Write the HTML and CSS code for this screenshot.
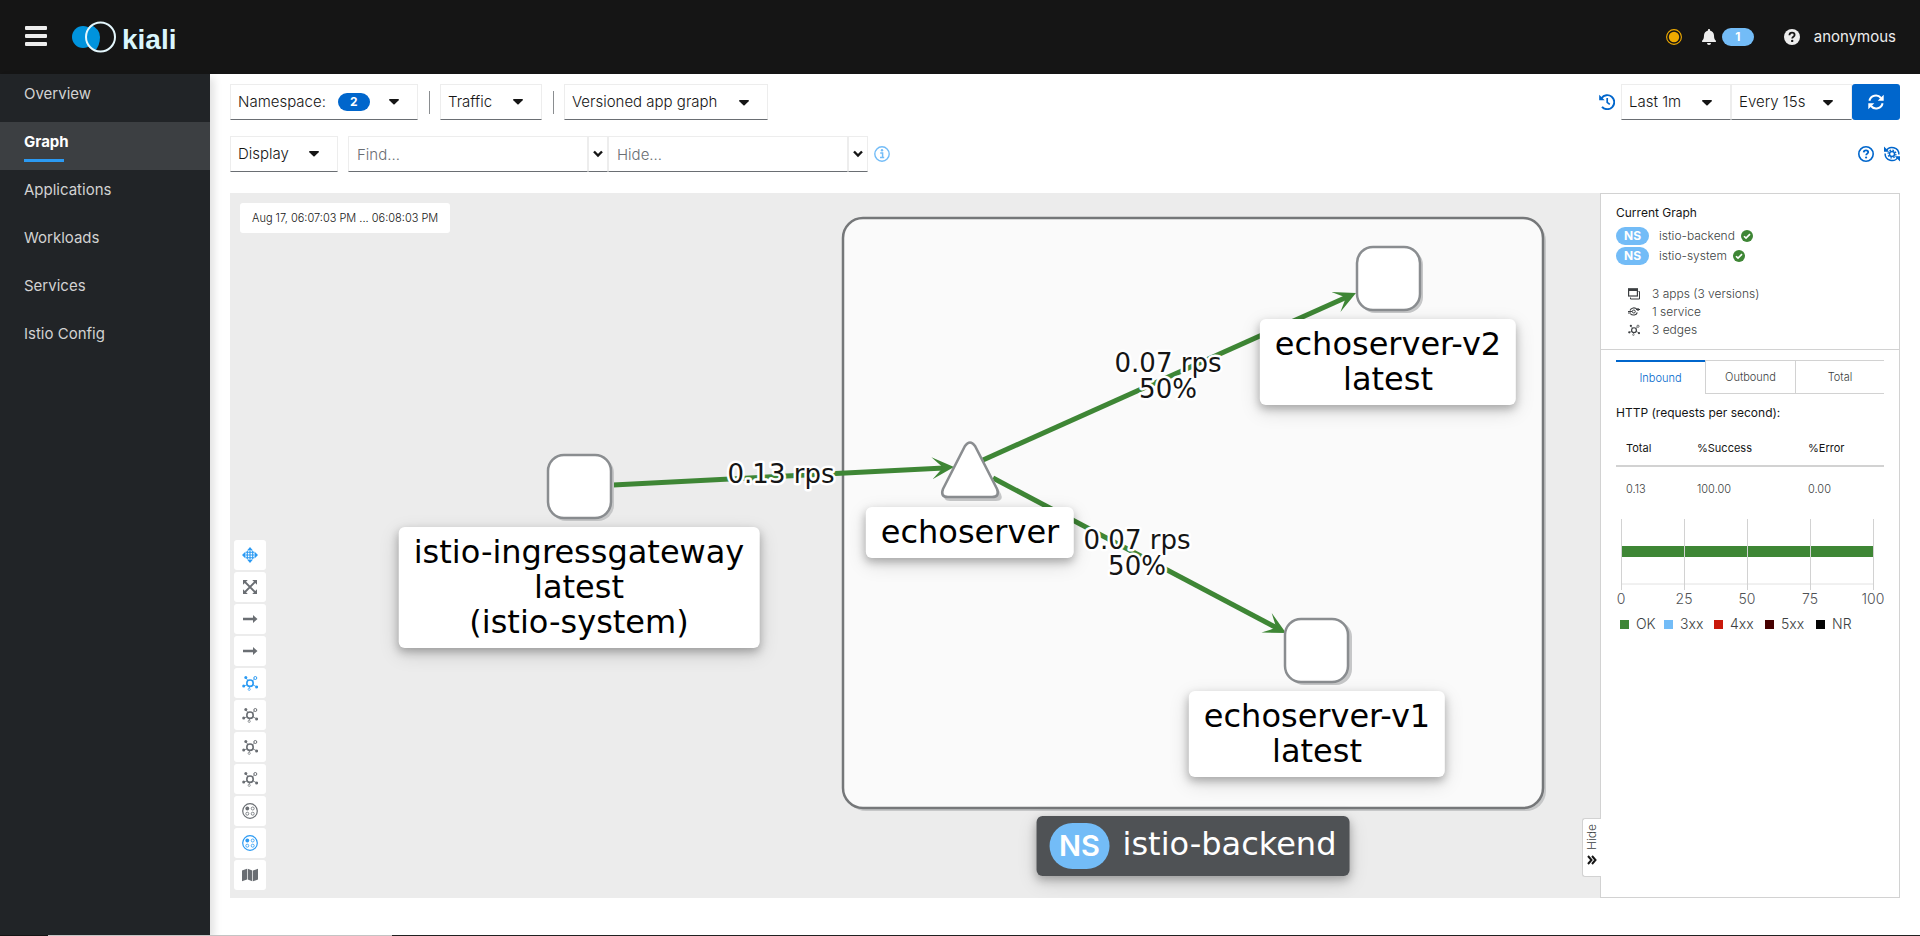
FILE: index.html
```html
<!DOCTYPE html>
<html lang="en">
<head>
<meta charset="utf-8">
<meta name="viewport" content="width=device-width, initial-scale=1">
<title>Kiali</title>
<link rel="stylesheet" href="styles.css">
</head>
<body>
<svg class="sprite" aria-hidden="true">
  <symbol id="i-topology" viewBox="0 0 16 16">
    <circle cx="8" cy="8.2" r="3.2" fill="none" stroke="currentColor" stroke-width="1.6"/>
    <circle cx="13.3" cy="3" r="1.5" fill="none" stroke="currentColor"/>
    <circle cx="3.8" cy="2.4" r="1.5" fill="currentColor"/>
    <circle cx="1.7" cy="11" r="1.5" fill="currentColor"/>
    <circle cx="14.6" cy="12" r="1.5" fill="currentColor"/>
    <circle cx="7.2" cy="14.3" r="1.1" fill="none" stroke="currentColor" stroke-width=".7"/>
    <path d="M4 3l2 2.6M12.3 4.2l-2 1.8M2 11l3.2-1.2M14.2 11.6l-3.2-1.8M7.3 13l.3-2" stroke="currentColor" stroke-width=".8" fill="none"/>
  </symbol>
  <symbol id="i-arrow" viewBox="0 0 16 16">
    <path d="M1 6.800h10V4L15.500 8 11 12V9.200H1z" fill="currentColor"/>
  </symbol>
  <symbol id="i-group" viewBox="0 0 16 16">
    <circle cx="8" cy="8" r="7.300" fill="none" stroke="currentColor" stroke-width="1.200"/>
    <circle cx="5.300" cy="5.500" r="1.900" fill="currentColor"/>
    <g fill="none" stroke="currentColor" stroke-width=".8"><circle cx="10.700" cy="5.500" r="1.500"/><circle cx="5.300" cy="10.700" r="1.500"/><circle cx="10.700" cy="10.700" r="1.500"/></g>
  </symbol>
  <symbol id="i-check" viewBox="0 0 16 16">
    <circle cx="8" cy="8" r="8" fill="#3e8635"/>
    <path d="M4 8.300l2.700 2.600L12 5.600" fill="none" stroke="#fff" stroke-width="2.200"/>
  </symbol>
  <symbol id="i-chevron" viewBox="0 0 10 8">
    <path d="M1 1.500l4 4 4-4" fill="none" stroke="currentColor" stroke-width="2.400"/>
  </symbol>
  <symbol id="i-caret" viewBox="0 0 10 6">
    <path d="M.8 0h8.400c.7 0 1 .8.500 1.300L5.600 5.300a.9.9 0 0 1-1.200 0L.3 1.300C-.2.8.1 0 .8 0z" fill="currentColor"/>
  </symbol>
</svg>

<header class="masthead">
  <button class="burger" type="button" aria-label="Global navigation"><span></span><span></span><span></span></button>
  <a class="brand" href="#" aria-label="Kiali home">
    <svg class="brand-mark" width="46" height="34" viewBox="0 0 46 34" aria-hidden="true">
      <circle cx="12" cy="17" r="11" fill="#0093dd"/>
      <path d="M20 5q9 4 9 12t-5 14q-9-5-9-14t5-12z" fill="#0093dd"/>
      <circle cx="29.500" cy="17" r="14.500" fill="none" stroke="#e4f7fd" stroke-width="2"/>
    </svg>
    <span class="brand-name">kiali</span>
  </a>
  <div class="masthead-tools">
    <svg width="16" height="16" viewBox="0 0 16 16" aria-hidden="true"><circle cx="8" cy="8" r="7.400" fill="none" stroke="#f0ab00" stroke-width="1.100"/><circle cx="8" cy="8" r="5.200" fill="#f0ab00"/></svg>
    <button class="notify" type="button" aria-label="Notifications">
      <svg width="14" height="16" viewBox="0 0 14 16" aria-hidden="true"><path d="M7 0c.6 0 1 .4 1 1v.6c2.300.5 4 2.400 4 4.900 0 2.800.7 4 1.700 5 .7.8.2 1.500-.700 1.500H1c-.9 0-1.400-.7-.7-1.500 1-1 1.700-2.200 1.700-5 0-2.500 1.700-4.400 4-4.900V1c0-.6.4-1 1-1zM5 14h4a2 2 0 0 1-4 0z" fill="#ededed"/></svg>
      <span class="badge badge-light">1</span>
    </button>
    <button class="help" type="button" aria-label="Help">
      <svg width="16" height="16" viewBox="0 0 16 16" aria-hidden="true"><circle cx="8" cy="8" r="8" fill="#ededed"/><path d="M5.400 6.200C5.500 4.600 6.500 3.700 8 3.700s2.600.9 2.600 2.200c0 1.700-2.400 1.900-2.400 3.600" fill="none" stroke="#151515" stroke-width="1.800"/><circle cx="8.200" cy="11.900" r="1.200" fill="#151515"/></svg>
    </button>
    <button class="user" type="button">anonymous</button>
  </div>
</header>

<div class="shell">
  <nav class="sidebar" aria-label="Main">
    <a href="#">Overview</a>
    <a href="#" class="current" aria-current="page">Graph</a>
    <a href="#">Applications</a>
    <a href="#">Workloads</a>
    <a href="#">Services</a>
    <a href="#">Istio Config</a>
  </nav>

  <main class="content">
    <div class="toolbar">
      <button class="drop drop-ns" type="button">Namespace: <span class="badge badge-blue">2</span><svg class="caret"><use href="#i-caret"/></svg></button>
      <span class="divider"></span>
      <button class="drop drop-traffic" type="button">Traffic<svg class="caret"><use href="#i-caret"/></svg></button>
      <span class="divider"></span>
      <span class="pick pick-type"><select aria-label="Graph type"><option>Versioned app graph</option></select><svg class="caret"><use href="#i-caret"/></svg></span>
      <div class="toolbar-end">
        <button class="icon-link" type="button" aria-label="Replay">
          <svg width="16" height="16" viewBox="0 0 16 16" aria-hidden="true"><path d="M2.500 4.200A7 7 0 1 1 3 12.800" fill="none" stroke="currentColor" stroke-width="1.900"/><path d="M.2.800v5.500h5.500z" fill="currentColor"/><path d="M8.200 4v4.400l2.600 2" fill="none" stroke="currentColor" stroke-width="1.700"/></svg>
        </button>
        <span class="pick pick-last"><select aria-label="Duration"><option>Last 1m</option></select><svg class="caret"><use href="#i-caret"/></svg></span>
        <span class="pick pick-every"><select aria-label="Refresh interval"><option>Every 15s</option></select><svg class="caret"><use href="#i-caret"/></svg></span>
        <button class="refresh" type="button" aria-label="Refresh">
          <svg width="16" height="16" viewBox="0 0 16 16" aria-hidden="true"><path d="M1.400 6.800A6.600 6.600 0 0 1 13 4M14.600 9.200A6.600 6.600 0 0 1 3 12" fill="none" stroke="#fff" stroke-width="2"/><path d="M15.700.8v6h-6zM.3 15.200v-6h6z" fill="#fff"/></svg>
        </button>
      </div>
    </div>

    <div class="toolbar toolbar-second">
      <button class="drop drop-display" type="button">Display<svg class="caret"><use href="#i-caret"/></svg></button>
      <div class="finder">
        <input type="text" placeholder="Find..." aria-label="Find">
        <button type="button" aria-label="Find presets"><svg width="10" height="8"><use href="#i-chevron"/></svg></button>
        <input type="text" placeholder="Hide..." aria-label="Hide">
        <button type="button" aria-label="Hide presets"><svg width="10" height="8"><use href="#i-chevron"/></svg></button>
      </div>
      <button class="info" type="button" aria-label="Find and hide help">
        <svg width="16" height="16" viewBox="0 0 16 16" aria-hidden="true"><circle cx="8" cy="8" r="7.200" fill="none" stroke="currentColor" stroke-width="1.400"/><path d="M6.200 7h2.400v4.300M6 11.500h4.200" fill="none" stroke="currentColor" stroke-width="1.500"/><circle cx="8" cy="4.300" r="1.200" fill="currentColor"/></svg>
      </button>
      <div class="toolbar-end help-links">
        <button class="icon-link" type="button" aria-label="Shortcuts and tips">
          <svg width="16" height="16" viewBox="0 0 16 16" aria-hidden="true"><circle cx="8" cy="8" r="7.200" fill="none" stroke="currentColor" stroke-width="1.600"/><path d="M5.700 6.400C5.800 5 6.700 4.400 8 4.400s2.200.7 2.200 1.800c0 1.400-2 1.500-2 3" fill="none" stroke="currentColor" stroke-width="1.800"/><circle cx="8.100" cy="11.500" r="1.100" fill="currentColor"/></svg>
        </button>
        <button class="icon-link" type="button" aria-label="Reset to factory settings">
          <svg width="16" height="16" viewBox="0 0 16 16" aria-hidden="true"><path d="M2 5A6.900 6.900 0 0 1 14.900 8.500M14 11A6.900 6.900 0 0 1 1.100 7.500" fill="none" stroke="currentColor" stroke-width="1.500"/><path d="M0 .5v5.200h5.200zM16 15.500v-5.200h-5.200z" fill="currentColor"/><circle cx="8" cy="8" r="2.500" fill="none" stroke="currentColor" stroke-width="1.400"/><circle cx="8" cy="8" r="3.900" fill="none" stroke="currentColor" stroke-width="1.300" stroke-dasharray="1.500 1.563"/></svg>
        </button>
      </div>
    </div>

    <div class="graph">
      <section class="canvas" aria-label="Service graph">
        <svg class="drawing" aria-hidden="true">
          <defs>
            <marker id="vee" markerUnits="userSpaceOnUse" markerWidth="24" markerHeight="24" refX="22" refY="12" orient="auto"><path d="M0 1L22 12 0 23 11 12z" fill="#3e8635"/></marker>
          </defs>
          <rect x="616" y="28" width="700" height="590" rx="20" fill="#c6c7c8"/>
          <rect x="613" y="25" width="700" height="590" rx="20" fill="#fafafa" stroke="#757779" stroke-width="2.500"/>
          <g stroke="#3e8635" stroke-width="5" fill="none">
            <path d="M383 292L714 275"/><path d="M753 267L1117 104"/><path d="M763 285L1047 435"/>
          </g>
          <g stroke="none" fill="none">
            <path d="M383 292L724 274" marker-end="url(#vee)"/><path d="M753 267L1126 100" marker-end="url(#vee)"/><path d="M763 285L1056 440" marker-end="url(#vee)"/>
          </g>
          <g fill="#c6c7c8">
            <rect x="320" y="264" width="64" height="64" rx="16"/><rect x="1129" y="56" width="64" height="64" rx="16"/><rect x="1058" y="428" width="64" height="64" rx="16"/>
            <path d="M738 254q4-7 8 0l25 47q3 7-5 7h-46q-8 0-5-7z"/>
          </g>
          <g fill="#fff" stroke="#8a8d90" stroke-width="2.500">
            <rect x="318" y="262" width="63" height="63" rx="16"/><rect x="1127" y="54" width="63" height="63" rx="16"/><rect x="1055" y="426" width="63" height="63" rx="16"/>
            <path d="M735 253q5-7 10 0l22 43q3 8-5 8h-44q-8 0-5-8z"/>
          </g>
        </svg>
        <div class="node-label at-gateway">istio-ingressgateway<br>latest<br>(istio-system)</div>
        <div class="node-label at-echo">echoserver</div>
        <div class="node-label at-v2">echoserver-v2<br>latest</div>
        <div class="node-label at-v1">echoserver-v1<br>latest</div>
        <div class="node-label box-label at-box"><span class="box-ns">NS</span><span class="box-name">istio-backend</span></div>
        <svg class="drawing edge-text">
          <text x="551" y="290">0.13 rps</text>
          <text x="938" y="179">0.07 rps<tspan x="938" dy="26">50%</tspan></text>
          <text x="907" y="356">0.07 rps<tspan x="907" dy="26">50%</tspan></text>
        </svg>

        <div class="timestamp">Aug 17, 06:07:03 PM ... 06:08:03 PM</div>
        <div class="graph-tools">
          <button type="button" class="on" aria-label="Drag"><svg width="16" height="16" viewBox="0 0 16 16"><path d="M8 0l3 3.500H5zM8 16l3-3.500H5zM0 8l3.500-3.500v7zM16 8l-3.500-3.500v7z" fill="currentColor"/><path d="M5.300 4v8M8 4v8M10.700 4v8M4 5.300h8M4 8h8M4 10.700h8" stroke="currentColor" stroke-width="1.100"/></svg></button>
          <button type="button" aria-label="Zoom to fit"><svg width="16" height="16" viewBox="0 0 16 16"><path d="M2.500 2.500l11 11M13.500 2.500l-11 11" stroke="currentColor" stroke-width="1.800"/><path d="M1 1h4.800L1 5.800zM15 1v4.800L10.200 1zM1 15v-4.800L5.800 15zM15 15h-4.800L15 10.200z" fill="currentColor"/></svg></button>
          <button type="button" aria-label="Hide edges"><svg width="16" height="16"><use href="#i-arrow"/></svg></button>
          <button type="button" aria-label="Dim edges"><svg width="16" height="16"><use href="#i-arrow"/></svg></button>
          <button type="button" class="on" aria-label="Layout default"><svg width="16" height="16"><use href="#i-topology"/></svg></button>
          <button type="button" aria-label="Layout 1"><svg width="16" height="16"><use href="#i-topology"/></svg></button>
          <button type="button" aria-label="Layout 2"><svg width="16" height="16"><use href="#i-topology"/></svg></button>
          <button type="button" aria-label="Layout 3"><svg width="16" height="16"><use href="#i-topology"/></svg></button>
          <button type="button" aria-label="Namespace layout 1"><svg width="16" height="16"><use href="#i-group"/></svg></button>
          <button type="button" class="on" aria-label="Namespace layout 2"><svg width="16" height="16"><use href="#i-group"/></svg></button>
          <button type="button" aria-label="Legend"><svg width="16" height="16" viewBox="0 0 16 16"><path d="M0 3.500L5 1.700v10.800L0 14.300zM5.700 1.700l4.600 1.800v10.800l-4.600-1.800zM11 3.500l5-1.800v10.800l-5 1.800z" fill="currentColor"/></svg></button>
        </div>
      </section>

      <aside class="panel">
        <button class="hide-tab" type="button"><svg width="10" height="10" viewBox="0 0 10 10" aria-hidden="true"><path d="M1 1l3.500 4L1 9M5 1l3.500 4L5 9" fill="none" stroke="currentColor" stroke-width="2"/></svg>Hide</button>
        <div class="summary">
          <h2>Current Graph</h2>
          <div class="ns-row"><span class="ns">NS</span>istio-backend<svg width="12" height="12"><use href="#i-check"/></svg></div>
          <div class="ns-row"><span class="ns">NS</span>istio-system<svg width="12" height="12"><use href="#i-check"/></svg></div>
          <ul class="stats">
            <li><svg width="12" height="12" viewBox="0 0 12 12"><rect x=".6" y="1" width="8.800" height="7" fill="none" stroke="currentColor" stroke-width="1.200"/><path d="M10.500 3.500h1v7.500h-9V9.500" stroke="currentColor" fill="none"/><path d="M0 .4h10V3H0z" fill="currentColor"/></svg>3 apps (3 versions)</li>
            <li><svg width="12" height="12" viewBox="0 0 12 12"><path d="M2 4.500A4 3.700 0 0 1 9 3.300M9.300 6.500A4 3.700 0 0 1 2.500 7.800" fill="none" stroke="currentColor" stroke-width="1.100"/><circle cx="5.800" cy="5.500" r="1.500" fill="none" stroke="currentColor"/><path d="M0 5.500h4M8 3.500h4M0 7h3" stroke="currentColor"/><circle cx="10" cy="3.500" r="1.300" fill="currentColor"/></svg>1 service</li>
            <li><svg width="12" height="12"><use href="#i-topology"/></svg>3 edges</li>
          </ul>
        </div>
        <div class="traffic">
          <div class="tabs" role="tablist">
            <button type="button" role="tab" aria-selected="true">Inbound</button>
            <button type="button" role="tab" aria-selected="false">Outbound</button>
            <button type="button" role="tab" aria-selected="false">Total</button>
          </div>
          <h3>HTTP (requests per second):</h3>
          <table>
            <thead><tr><th>Total</th><th>%Success</th><th>%Error</th></tr></thead>
            <tbody><tr><td>0.13</td><td>100.00</td><td>0.00</td></tr></tbody>
          </table>
          <svg class="chart" viewBox="0 0 268 90" role="img" aria-label="OK 100 percent">
            <path d="M5 68h252" stroke="#e2e2e2" fill="none"/>
            <rect x="5" y="30" width="252" height="11" fill="#3e8635"/>
            <path d="M5.500 3v71M68.500 3v71M131.500 3v71M194.500 3v71M257.500 3v71" stroke="#d2d2d2" fill="none"/>
            <text x="5" y="88">0</text><text x="68" y="88">25</text><text x="131" y="88">50</text><text x="194" y="88">75</text><text x="257" y="88">100</text>
          </svg>
          <ul class="legend">
            <li class="ok">OK</li><li class="c3">3xx</li><li class="c4">4xx</li><li class="c5">5xx</li><li class="nr">NR</li>
          </ul>
        </div>
      </aside>
    </div>
  </main>
</div>
<div class="edge-strip"></div>
</body>
</html>
```

FILE: styles.css
```css
* { box-sizing: border-box; }

body {
  margin: 0;
  min-height: 100vh;
  display: flex;
  flex-direction: column;
  font: 300 15px/24px Inter, "Open Sans", sans-serif;
  color: #151515;
  background: #fff;
}

button, input, select { font: inherit; color: inherit; margin: 0; }
button { border: 0; background: none; padding: 0; cursor: pointer; }
ul { list-style: none; margin: 0; padding: 0; }
h2, h3 { margin: 0; font-size: 12px; font-weight: 400; }
svg { display: block; flex: none; }
.sprite { position: absolute; width: 0; height: 0; }

/* Masthead */
.masthead {
  display: flex;
  align-items: center;
  height: 74px;
  padding: 0 24px;
  background: #151515;
  color: #ededed;
}
.burger { display: flex; flex-direction: column; gap: 4px; padding: 0 1px 2px; }
.burger span { width: 22px; height: 4px; background: #ededed; border-radius: 1px; }
.brand {
  display: flex;
  align-items: center;
  gap: 5px;
  margin-left: 23px;
  text-decoration: none;
}
.brand-name {
  font: 700 28px/32px "Liberation Sans", sans-serif;
  color: #d9f6fd;
  padding-top: 5px;
}
.masthead-tools { display: flex; align-items: center; margin-left: auto; font-weight: 400; }
.notify { display: flex; align-items: center; gap: 6px; margin-left: 20px; }
.help { margin-left: 30px; }
.user { margin-left: 14px; }
.badge {
  width: 32px;
  border-radius: 9px;
  font-size: 12px;
  line-height: 18px;
  font-weight: 700;
  text-align: center;
  color: #fff;
}
.badge-light { background: #73bcf7; }
.badge-blue { background: #06c; margin-left: 12px; }

/* Shell */
.shell { display: flex; flex: 1; }
.sidebar {
  width: 210px;
  flex: none;
  background: #212427;
  box-shadow: 4px 4px 8px rgba(0, 0, 0, .12);
}
.sidebar a {
  display: block;
  padding: 8px 24px 16px;
  color: #d2d2d2;
  font-weight: 400;
  text-decoration: none;
}
.sidebar .current { position: relative; background: #3c3f42; color: #fff; font-weight: 700; }
.sidebar .current::after {
  content: "";
  position: absolute;
  left: 24px;
  bottom: 8px;
  width: 40px;
  height: 3px;
  background: #2b9af3;
}

.content {
  flex: 1;
  min-width: 0;
  display: flex;
  flex-direction: column;
  padding: 10px 20px 37px;
}

/* Toolbars */
.toolbar { display: flex; align-items: center; height: 36px; }
.toolbar-second { margin: 16px 0 21px; }
.toolbar-end { display: flex; align-items: center; margin-left: auto; }
.drop, .pick {
  display: flex;
  align-items: center;
  height: 36px;
  border: 1px solid #ededed;
  border-bottom-color: #6a6e73;
}
.drop { padding: 0 18px 0 7px; }
.pick { position: relative; }
.pick select {
  appearance: none;
  width: 100%;
  height: 100%;
  border: 0;
  padding: 0 7px;
  background: transparent;
}
.caret { width: 10px; height: 6px; margin-left: auto; }
.pick .caret { position: absolute; right: 18px; top: 15px; pointer-events: none; }
.drop-ns { width: 188px; }
.drop-traffic { width: 102px; }
.drop-display { width: 108px; }
.pick-type { width: 204px; }
.pick-last { width: 110px; margin-left: 6px; }
.pick-every { width: 121px; }
.divider { width: 1px; height: 23px; margin: 0 10px 0 11px; background: #8a8d90; }
.icon-link { color: #06c; }
.refresh {
  display: grid;
  place-items: center;
  width: 48px;
  height: 36px;
  border-radius: 3px;
  background: #06c;
}
.finder { display: flex; margin-left: 10px; }
.finder input, .finder button {
  height: 36px;
  border: 1px solid #ededed;
  border-bottom-color: #6a6e73;
}
.finder input { width: 240px; padding: 0 8px; background: #fff; border-radius: 0; }
.finder input::placeholder { color: #6a6e73; opacity: 1; }
.finder button { width: 20px; display: grid; place-items: center; }
.info { margin-left: 6px; color: #73bcf7; }
.help-links { gap: 10px; }

/* Graph */
.graph { display: flex; flex: 1; min-height: 705px; }
.canvas { position: relative; flex: 1; min-width: 0; background: #ececec; overflow: hidden; }
.drawing { position: absolute; inset: 0; width: 100%; height: 100%; }
.edge-text text {
  font: 400 26px "DejaVu Sans", sans-serif;
  text-anchor: middle;
  fill: #151515;
  stroke: #fff;
  stroke-width: 5px;
  stroke-linejoin: round;
  paint-order: stroke;
}
.node-label {
  position: absolute;
  transform: translateX(-50%);
  padding: 8px 15px;
  border-radius: 6px;
  background: #fff;
  color: #000;
  font: 400 32px/35px "DejaVu Sans", sans-serif;
  text-align: center;
  white-space: nowrap;
  box-shadow: 0 4px 8px rgba(3, 3, 3, .25), 0 6px 20px rgba(3, 3, 3, .14);
}
.at-gateway { left: 349px; top: 334px; }
.at-echo { left: 740px; top: 314px; }
.at-v2 { left: 1158px; top: 126px; }
.at-v1 { left: 1087px; top: 498px; }
.at-box { left: 963px; top: 623px; }
.box-label {
  display: flex;
  align-items: center;
  gap: 13px;
  padding: 7px 13px;
  background: #4f5255;
  color: #fff;
}
.box-ns {
  width: 60px;
  border-radius: 23px;
  background: #73bcf7;
  font: 600 29px/46px Inter, sans-serif;
}
.box-name { padding-bottom: 4px; }
.timestamp {
  position: absolute;
  left: 10px;
  top: 10px;
  padding: 3px 12px;
  border-radius: 3px;
  background: #fff;
  font-size: 11px;
}
.graph-tools {
  position: absolute;
  left: 4px;
  bottom: 8px;
  display: flex;
  flex-direction: column;
  gap: 2px;
}
.graph-tools button {
  display: grid;
  place-items: center;
  width: 32px;
  height: 30px;
  border-radius: 3px;
  background: #fff;
  color: #6a6e73;
}
.graph-tools .on { color: #2b9af3; }

/* Side panel */
.panel {
  position: relative;
  width: 300px;
  flex: none;
  border: 1px solid #d2d2d2;
  background: #fff;
  font-size: 12px;
  line-height: 18px;
  color: #3c3f42;
}
.hide-tab {
  position: absolute;
  right: 100%;
  bottom: 20px;
  display: flex;
  align-items: center;
  gap: 5px;
  writing-mode: vertical-rl;
  transform: rotate(180deg);
  width: 19px;
  height: 59px;
  padding: 11px 0 0;
  border: 1px solid #d2d2d2;
  border-left: 0;
  border-radius: 0 3px 3px 0;
  background: #fff;
}
.hide-tab svg { color: #151515; transform: rotate(180deg); }
.summary { padding: 10px 15px; border-bottom: 1px solid #d2d2d2; }
.summary h2 { margin-bottom: 5px; color: #151515; }
.ns-row { display: flex; align-items: center; margin-bottom: 2px; }
.ns-row .ns {
  width: 33px;
  margin-right: 10px;
  border-radius: 9px;
  background: #73bcf7;
  color: #fff;
  font-weight: 700;
  text-align: center;
}
.ns-row svg { margin-left: 6px; }
.stats { margin-top: 20px; padding-left: 12px; }
.stats li { display: flex; align-items: center; gap: 12px; }
.stats svg { color: #3c3f42; }
.traffic { padding: 10px 15px; }
.tabs { display: grid; grid-template-columns: 89px 90px 1fr; height: 34px; }
.tabs button {
  font-size: 11px;
  border-top: 1px solid #d2d2d2;
  border-bottom: 1px solid #d2d2d2;
  border-left: 1px solid #d2d2d2;
}
.tabs [aria-selected="true"] {
  border-left: 0;
  border-bottom: 0;
  border-top: 2px solid #06c;
  color: #06c;
}
.traffic h3 { margin: 10px 0 8px; color: #151515; }
.traffic table { width: 100%; border-collapse: collapse; table-layout: fixed; }
.traffic th, .traffic td { padding: 0 0 0 10px; text-align: left; font-weight: 400; font-size: 11px; }
.traffic th { height: 36px; color: #151515; border-bottom: 2px solid #d2d2d2; }
.traffic td { height: 44px; font-weight: 300; }
.traffic th:nth-child(1) { width: 71px; }
.traffic th:nth-child(2) { width: 111px; }
.chart { width: 100%; margin-top: 6px; overflow: visible; }
.chart text { font-size: 14px; text-anchor: middle; fill: #4f5255; }
.legend {
  display: grid;
  grid-template-columns: 44px 50px 51px 51px auto;
  margin-top: 9px;
  padding-left: 4px;
  font-size: 14px;
}
.legend li { display: flex; align-items: center; gap: 7px; }
.legend li::before { content: ""; width: 9px; height: 9px; background: currentcolor; }
.legend .ok::before { background: #3e8635; }
.legend .c3::before { background: #73bcf7; }
.legend .c4::before { background: #c9190b; }
.legend .c5::before { background: #470000; }
.legend .nr::before { background: #030303; }

.edge-strip {
  height: 1px;
  background: linear-gradient(to right, #151515 48px, #c4c4c4 48px, #c4c4c4 392px, #212121 392px);
}
```
